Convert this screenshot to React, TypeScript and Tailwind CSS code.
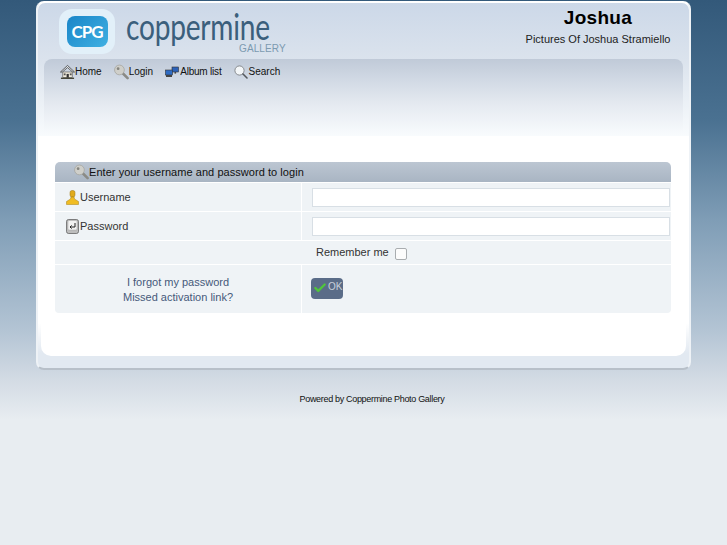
import { Check } from "lucide-react";

const sans = "font-['Liberation_Sans',Arial,sans-serif]";

function HomeIcon() {
  return (
    <svg width="15" height="16" viewBox="0 0 16 16" className="shrink-0">
      <path d="M0.5 8 L8 1 L15.5 8 L13.5 8 L8 3.2 L2.5 8 Z" fill="#e8edf2" stroke="#333" strokeWidth="0.8" />
      <rect x="3" y="8" width="10" height="6" fill="#f4efe0" stroke="#555" strokeWidth="0.7" />
      <rect x="7" y="10" width="2.4" height="4" fill="#333" />
      <rect x="4" y="9.5" width="2" height="2" fill="#555" />
      <rect x="10.4" y="9.5" width="2" height="2" fill="#555" />
      <rect x="1" y="14" width="14" height="1.4" fill="#3d3d2e" />
    </svg>
  );
}

function KeyIcon() {
  return (
    <svg width="15" height="16" viewBox="0 0 16 16" className="shrink-0">
      <path d="M8.5 8.5 L14.5 14.5" stroke="#8b8b86" strokeWidth="2.8" strokeLinecap="round" />
      <circle cx="5.8" cy="5.8" r="5.2" fill="#cfcfca" stroke="#a3a39e" strokeWidth="0.8" />
      <circle cx="4.4" cy="4.4" r="1.5" fill="#85857f" />
    </svg>
  );
}

function AlbumIcon() {
  return (
    <svg width="14" height="12" viewBox="0 0 14 12" className="shrink-0">
      <rect x="7" y="1" width="6.5" height="5" fill="#2c62b8" stroke="#333" strokeWidth="0.6" />
      <rect x="9.5" y="6" width="1.6" height="1.6" fill="#444" />
      <rect x="0.5" y="4" width="7" height="5" fill="#2f6cc4" stroke="#333" strokeWidth="0.6" />
      <rect x="1" y="9" width="6" height="2" fill="#444" />
    </svg>
  );
}

function SearchIcon() {
  return (
    <svg width="14" height="14" viewBox="0 0 14 14" className="shrink-0">
      <circle cx="5.5" cy="5.5" r="4.6" fill="#f3f6f8" stroke="#7e8185" strokeWidth="0.9" />
      <path d="M9 9 L13 13" stroke="#55585c" strokeWidth="1.6" strokeLinecap="round" />
    </svg>
  );
}

function UserIcon() {
  return (
    <svg width="13" height="15" viewBox="0 0 13 15" className="shrink-0">
      <rect x="4" y="0.5" width="5" height="6.5" rx="2" fill="#e0aa1c" stroke="#9a7410" strokeWidth="0.5" />
      <path d="M5 7 L8 7 L8.5 9 L12.5 11.5 L12.5 14.5 L0.5 14.5 L0.5 11.5 L4.5 9 Z" fill="#f0bc22" stroke="#a67e10" strokeWidth="0.5" />
    </svg>
  );
}

function EnterKeyIcon() {
  return (
    <svg width="13" height="15" viewBox="0 0 13 15" className="shrink-0">
      <rect x="0.5" y="0.5" width="12" height="14" rx="2" fill="#bdbdbd" stroke="#555" strokeWidth="0.7" />
      <rect x="2" y="1.5" width="9" height="9.5" rx="1" fill="#f2f2f2" stroke="#999" strokeWidth="0.4" />
      <path d="M9 4 V8 H4 M5.6 6.4 L4 8 L5.6 9.6" fill="none" stroke="#222" strokeWidth="1" />
    </svg>
  );
}

function Logo() {
  return (
    <div className="flex items-start">
      <div className="flex h-[45px] w-[56px] items-center justify-center rounded-[13px] bg-[#e2f0f9]">
        <div className="flex h-[31px] w-[41px] items-center justify-center rounded-[8px] bg-[linear-gradient(135deg,#1a86c8,#3fb0e2)]">
          <span className="font-['Lato',sans-serif] text-[17px] leading-none font-bold tracking-[-1px] text-white">CPG</span>
        </div>
      </div>
      <div className="relative ml-[11px] h-[46px] w-[160px]">
        <span className="absolute top-0 left-0 origin-left scale-x-[0.76] font-['Lato',sans-serif] text-[37px] leading-[34px] font-normal tracking-[-0.3px] text-[#3b5f7c]">
          coppermine
        </span>
        <span className={`absolute top-[35px] left-[113px] ${sans} text-[10px] leading-[10px] tracking-[0.1px] text-[#7c9ab0]`}>GALLERY</span>
      </div>
    </div>
  );
}

function NavItem({ icon, label, className }: { icon: React.ReactNode; label: string; className?: string }) {
  return (
    <a className={`flex items-center ${className ?? ""}`}>
      {icon}
      <span>{label}</span>
    </a>
  );
}

export default function App() {
  return (
    <div className={`min-h-[545px] bg-[#e8edf1] bg-[linear-gradient(#33597a_0px,#4a7191_120px,#7f9db6_220px,#b3c4d4_330px,#d3dbe4_380px,#e8edf1_420px)] bg-no-repeat ${sans}`}>
      <div className="pt-px pl-[36px]">
        <main className="h-[369px] w-[655px] rounded-[8px] border-2 border-t-white border-r-[#eef2f6] border-b-[#b8c0c9] border-l-[#eef2f6] bg-[linear-gradient(#ffffff_320px,#e2e9f1_350px)]">
          <header className="h-[133px] rounded-t-[7px] bg-[linear-gradient(#ccd8e8_0px,#dbe3ed_57px,#f8fbfd_133px)] px-[6px]">
            <div className="flex h-[56px] items-start justify-between pt-[6px] pl-[15px]">
              <Logo />
              <div className="mt-[-2px] mr-[12px] w-[146px] text-center whitespace-nowrap text-black">
                <h1 className="text-[19px] leading-[22px] font-bold tracking-[0.3px]">Joshua</h1>
                <p className="mt-[3px] text-[11px] leading-[14px] text-[#222]">Pictures Of Joshua Stramiello</p>
              </div>
            </div>
            <nav className="h-[77px] rounded-t-[8px] bg-[linear-gradient(#c0cad8_0px,#d2dae5_22px,#e4e9f0_44px,#f8fbfd_76px)] pt-[5px] pl-[16px] text-[10px] leading-[16px] text-[#111]">
              <div className="flex items-center">
                <NavItem icon={<HomeIcon />} label="Home" />
                <NavItem icon={<KeyIcon />} label="Login" className="ml-[12px]" />
                <NavItem icon={<AlbumIcon />} label="Album list" className="ml-[12px] gap-px tracking-[-0.2px]" />
                <NavItem icon={<SearchIcon />} label="Search" className="ml-[12px] gap-px" />
              </div>
            </nav>
          </header>

          <div className="mx-[3px] h-[220px] rounded-b-[10px] bg-white pt-[26px]">
            <section className="mx-[14px] w-[616px] text-[11px] leading-[14px]">
              <div className="flex h-[20px] items-center rounded-t-[5px] bg-[linear-gradient(#bcc6d2,#a9b5c3)] pl-[19px] text-[#111]">
                <KeyIcon />
                <span className="tracking-[0.05px]">Enter your username and password to login</span>
              </div>
              <div className="grid grid-cols-[246px_1fr] gap-x-px gap-y-px pt-px text-[#333]">
                <div className="flex h-[28px] items-center gap-px bg-[#eff3f6] pl-[11px]">
                  <UserIcon />
                  <span>Username</span>
                </div>
                <div className="flex h-[28px] items-center bg-[#eff3f6] pl-[10px]">
                  <input className="mt-px h-[19px] w-[358px] border border-[#d8dfe5] bg-white" />
                </div>
                <div className="flex h-[28px] items-center gap-px bg-[#eff3f6] pl-[11px]">
                  <EnterKeyIcon />
                  <span>Password</span>
                </div>
                <div className="flex h-[28px] items-center bg-[#eff3f6] pl-[10px]">
                  <input type="password" className="mt-px h-[19px] w-[358px] border border-[#d8dfe5] bg-white" />
                </div>
                <div className="col-span-2 flex h-[23px] items-center bg-[#eff3f6] pl-[261px]">
                  <span className="mb-px">Remember me</span>
                  <span className="mt-[2px] ml-[6px] h-[12px] w-[12px] rounded-[2px] border border-[#a9adb0] bg-[#fcfcfc]" />
                </div>
                <div className="flex h-[48px] flex-col justify-center rounded-bl-[4px] bg-[#eff3f6] pt-px text-center text-[#46597a]">
                  <a className="leading-[15px]">I forgot my password</a>
                  <a className="leading-[15px]">Missed activation link?</a>
                </div>
                <div className="h-[48px] rounded-br-[4px] bg-[#eff3f6] pt-[13px] pl-[9px]">
                  <button className="flex h-[21px] w-[32px] items-start rounded-[4px] bg-[#5a6c88] pt-[2px] pl-[2px] text-[10px] leading-[14px] text-[#c8d0db]">
                    <Check size={14} strokeWidth={4} className="mt-[1px] shrink-0 text-[#4fc53c]" />
                    <span className="ml-px">OK</span>
                  </button>
                </div>
              </div>
            </section>
          </div>
        </main>
        <footer className="mt-[23px] w-[672px] text-center text-[9px] leading-[12px] tracking-[-0.32px] text-[#111]">
          Powered by Coppermine Photo Gallery
        </footer>
      </div>
    </div>
  );
}
